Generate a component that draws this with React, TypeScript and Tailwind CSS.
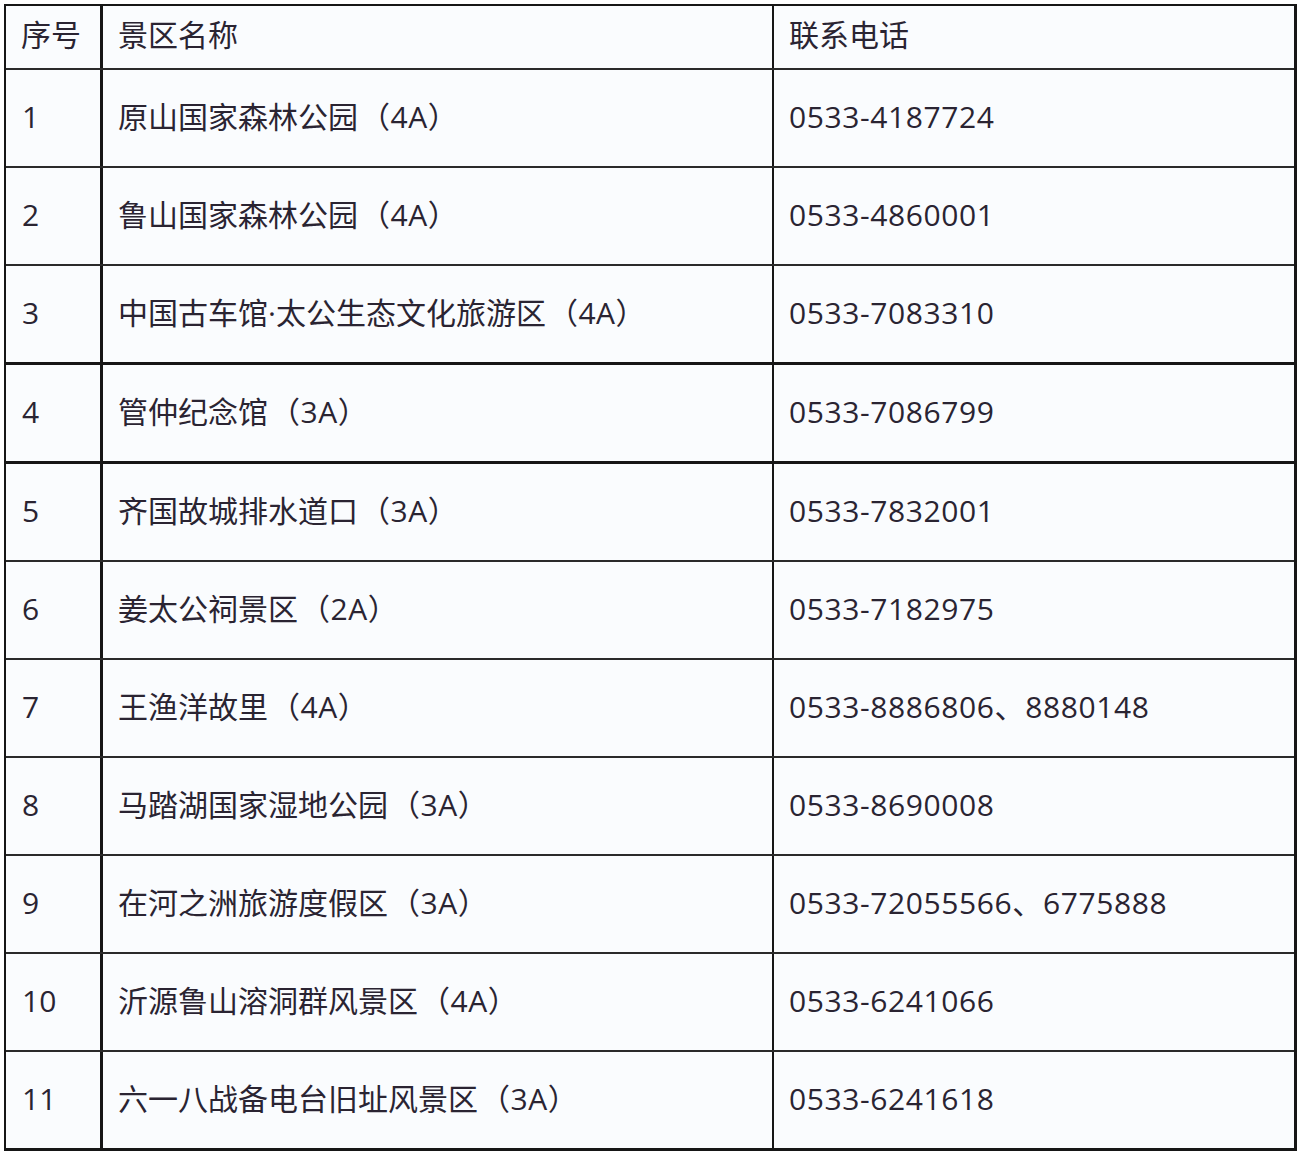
const rows = [
  { no: '1', name: '原山国家森林公园', grade: '4A', tel: '0533-4187724' },
  { no: '2', name: '鲁山国家森林公园', grade: '4A', tel: '0533-4860001' },
  { no: '3', name: '中国古车馆·太公生态文化旅游区', grade: '4A', tel: '0533-7083310' },
  { no: '4', name: '管仲纪念馆', grade: '3A', tel: '0533-7086799', thick: true },
  { no: '5', name: '齐国故城排水道口', grade: '3A', tel: '0533-7832001', thick: true },
  { no: '6', name: '姜太公祠景区', grade: '2A', tel: '0533-7182975' },
  { no: '7', name: '王渔洋故里', grade: '4A', tel: '0533-8886806、8880148' },
  { no: '8', name: '马踏湖国家湿地公园', grade: '3A', tel: '0533-8690008' },
  { no: '9', name: '在河之洲旅游度假区', grade: '3A', tel: '0533-72055566、6775888' },
  { no: '10', name: '沂源鲁山溶洞群风景区', grade: '4A', tel: '0533-6241066' },
  { no: '11', name: '六一八战备电台旧址风景区', grade: '3A', tel: '0533-6241618' },
]

const App = () => {
  return (
    <div
      className="w-[1302px] h-[1158px] bg-white pt-[4px] pl-[4px] text-[#2a2432] text-[30px] leading-none"
      style={{ fontFamily: '"Open Sans", "Noto Sans CJK SC", sans-serif' }}
    >
      <div className="w-[1293px] border-t-2 border-l-2 border-r-[3px] border-b-[3px] border-[#161616] bg-[#fafcfe]">
        {/* header */}
        <div className="grid grid-cols-[97px_671px_1fr] h-[62px]">
          <div className="border-r-[3px] border-[#161616] pl-[15px] pb-[4px] flex items-center">序号</div>
          <div className="border-r-2 border-[#161616] pl-[15px] pb-[4px] flex items-center">景区名称</div>
          <div className="pl-[15px] pb-[4px] flex items-center">联系电话</div>
        </div>
        {rows.map((r) => (
          <div
            key={r.no}
            className={
              r.thick
                ? 'grid grid-cols-[97px_671px_1fr] h-[99px] border-t-[3px] border-[#161616]'
                : 'grid grid-cols-[97px_671px_1fr] h-[98px] border-t-2 border-[#2a2a2a]'
            }
          >
            <div className="border-r-[3px] border-[#161616] pl-[16px] pb-[2px] flex items-center">{r.no}</div>
            <div className="border-r-2 border-[#161616] pl-[15px] pb-[2px] flex items-center">
              {r.name}
              <span className="ml-[2px] tracking-[0.5px]">（{r.grade}）</span>
            </div>
            <div className="pl-[15px] pb-[2px] flex items-center tracking-[0.6px]">{r.tel}</div>
          </div>
        ))}
      </div>
    </div>
  )
}

export default App
